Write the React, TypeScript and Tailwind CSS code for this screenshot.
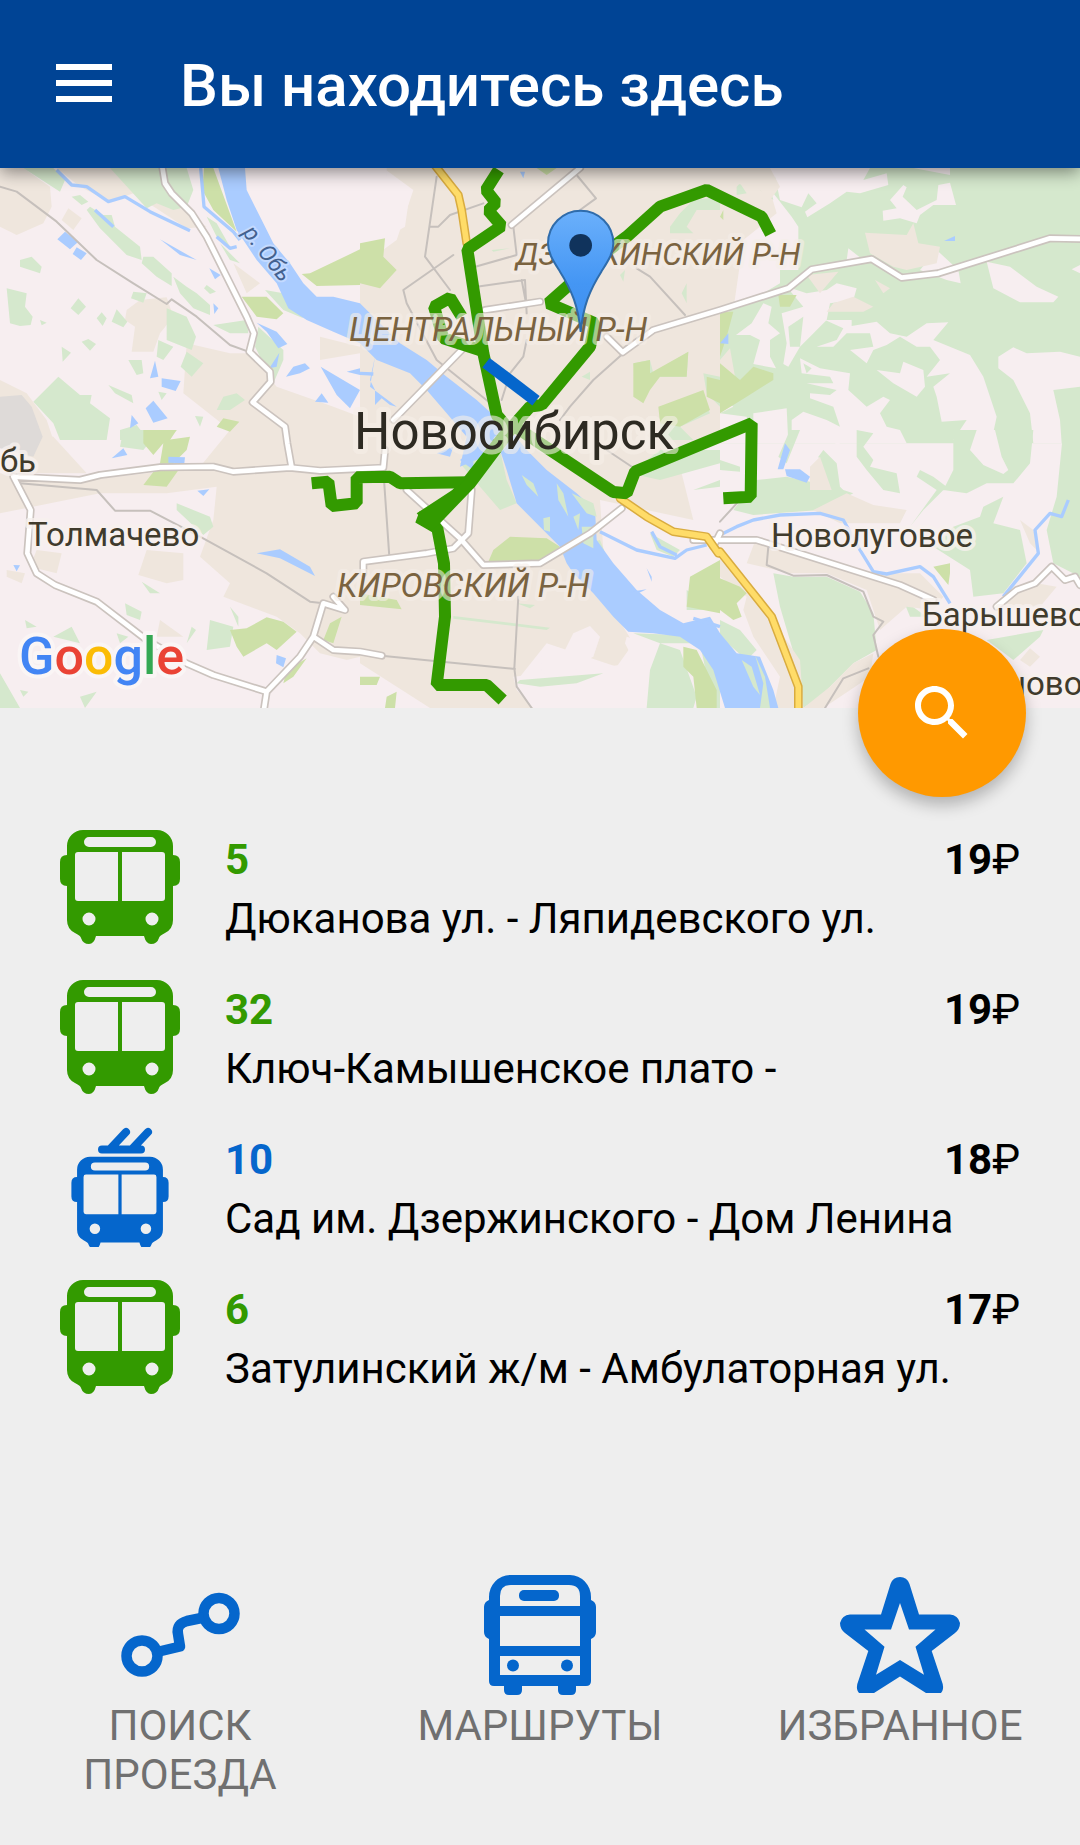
import React from "react";

type Kind = "bus" | "trolley";

const routes: { id: string; kind: Kind; name: string; price: number }[] = [
  { id: "5", kind: "bus", name: "Дюканова ул. - Ляпидевского ул.", price: 19 },
  { id: "32", kind: "bus", name: "Ключ-Камышенское плато -", price: 19 },
  { id: "10", kind: "trolley", name: "Сад им. Дзержинского - Дом Ленина", price: 18 },
  { id: "6", kind: "bus", name: "Затулинский ж/м - Амбулаторная ул.", price: 17 },
];

/* The map is drawn in six tiles, 1080 units wide each. */
const TILE = {
  a: "translate(0 480)",
  b: "translate(1080 480)",
  c: "translate(2160 480)",
  d: "translate(0 1290)",
  e: "translate(1080 1290)",
  f: "translate(2160 1290)",
};

const Land = () => (
  <g>
    <rect y="480" width="3240" height="1660" fill="#f7eef0" />
    <path
      fill="#efe6dd"
      d="M1150 504H2290L2330 640 2230 720 2200 930 2160 1100V1290L2040 1400 2080 1560 1800 1500 1820 1800 1900 1930 1850 2000 1640 1930 1560 2030 1600 2124H1290L1080 1990 960 1960 900 1900 830 1850 670 1790 690 1750 600 1670 640 1560 650 1460 500 1480 300 1480 0 1540V1420L270 1440 600 1400 690 1290 550 1180 560 1030 690 1060 750 1060 830 1160 1000 1220 1080 1250V1060L960 1080 960 1010 1080 1040V800L1190 720 1240 570Z"
    />
    <g fill="#f7eef0">
      <path transform={TILE.b} d="M0 24H80L80 50 150 95 135 200 75 235 0 225Z" />
      <path transform={TILE.e} d="M545 670L610 670 640 610 690 588 720 620 700 680 650 705 640 730 545 728ZM460 740L830 700 870 834H520L470 780ZM800 620L900 650 920 700 830 710 795 640Z" />
      <path transform={TILE.d} d="M830 790L1000 700 1080 680V834H810Z" />
    </g>
    <g fill="#efe6dd">
      <path transform={TILE.a} d="M0 24H70L150 80 155 140 130 190 50 225 0 200ZM205 145L245 175 220 210 185 180ZM170 24H350L430 90 540 145 620 200 560 205 400 100 330 125 240 80ZM380 450L420 420 500 412 520 470 480 520 460 575H395L405 500 375 480ZM0 660L80 700 140 780 160 840H0ZM700 310L780 370 740 400Z" />
      <path transform={TILE.d} d="M440 360L550 370 550 450 500 460 415 435ZM110 360L185 370 170 430 90 410ZM20 420L75 430 65 460 20 440ZM100 0L160 20 260 130 20 130ZM480 570L550 620 470 620Z" />
    </g>
    <path transform={TILE.a} fill="#dedad8" d="M0 710L65 705 95 740 128 830 100 890 0 865Z" />
    <g fill="#d5e8cd">
      <path
        transform={TILE.a}
        d="M70 24H160L195 60 180 95ZM330 24H560L580 90 560 140 520 150 470 130 440 145ZM215 110L240 105 265 125 245 135ZM270 140L310 165 335 165 345 200 420 260 425 300 380 285 300 205 260 150ZM60 300L95 290 125 320 120 340 60 320ZM430 290L460 290 515 340 515 378 470 350 425 310ZM20 385L80 400 75 440 98 470 92 495 60 498 30 490ZM235 415L258 440 235 465 212 445ZM120 480L140 488 125 496ZM305 457L320 475 308 498 290 475ZM350 448L382 485 370 502 335 485ZM520 350L560 380 590 400 630 435 630 465 580 445 540 400ZM500 445L560 470 588 530 575 570 500 540ZM245 545L265 537 288 552 270 572ZM185 560L213 578 188 605ZM400 395L440 400 430 428 393 415ZM475 540L520 560 490 600 470 590ZM560 575L610 610 575 650 542 620ZM385 600L425 600 430 640 410 645ZM620 375L648 395 630 402 612 385ZM640 495L740 480 745 520 690 520ZM775 500L850 570 850 600 820 670 765 560ZM795 390L850 400 890 450 910 475 850 450ZM620 170L650 190 690 260 650 230ZM660 250L720 310 690 300ZM325 675L395 705 400 730 345 700ZM650 750L670 710 710 700 735 720 690 750ZM475 695L500 700 485 720ZM175 650L240 705 275 705 270 730 330 775 320 840H180L160 790 100 725ZM360 810L410 795 445 840H360ZM585 768L610 770 600 800Z"
      />
      <path transform={TILE.b} d="M780 345L795 330 790 365ZM930 200L960 160 1000 120 1080 110V150L1010 150 980 200 1000 220 930 220ZM395 270L450 265 400 275ZM965 400L980 370 980 430ZM665 650L690 635 690 660ZM820 610L870 600 880 640 985 575 980 650 900 650 830 690ZM1030 640L1080 650V740L1040 700ZM900 740L1030 720 1050 760 960 800 1000 840H900Z" />
      <path transform={TILE.d} d="M180 0H310L240 30ZM370 0H480L430 60 360 50ZM530 220L630 260 640 290 610 315 530 240ZM425 455L480 490 450 490ZM375 520L425 545 420 570 380 555ZM75 570L110 590 80 595ZM215 590L240 640 160 620ZM0 730L60 834H0ZM60 780L85 785 70 800ZM240 800L290 785 255 834ZM630 570L700 590 690 650 620 660ZM690 530L715 560 715 590ZM350 610L385 620 360 640ZM575 590L588 600 560 640Z" />
      <path transform={TILE.e} d="M300 100L420 60 440 150 470 220 420 240 360 170ZM470 520L525 525 510 535ZM280 558L570 593 560 600 280 566ZM480 750L730 730 650 760 540 770 470 760ZM870 720L900 640 960 660 1010 800 1000 834H860ZM1020 640L1080 740V834H1060ZM810 130L900 60 1080 60V100L900 150ZM1000 180L1080 150V170ZM980 480L1080 540 980 540ZM680 340L720 330 740 380ZM820 610L960 615 1000 640 900 640ZM870 310L960 360 940 380 890 360Z" />
      <path transform={TILE.c} d="M50 80L60 70 80 100 50 105ZM120 90L150 85 160 120ZM170 24H1080V850H0V760L40 740 0 700 0 540 30 440 130 400 180 370V330H235V200L215 170 160 100Z" />
    </g>
    <g fill="#f7eef0">
      <path
        transform={TILE.c}
        d="M160 24H450L430 60 500 40 505 75 420 100 380 95 330 130 262 172 255 155 290 130 265 100 245 142 180 120ZM535 24H690V45L580 24ZM550 75L560 82 548 110 590 150 650 120 655 75 690 68 708 135 640 135 600 165 590 190 540 175 490 182 488 152 530 145 510 120ZM385 265L430 300 380 300ZM650 270L715 330 722 370 680 360 600 330ZM800 305L870 320 950 380 1015 410 1000 427 900 427 820 385ZM1080 315L1055 328 1080 340ZM200 380L260 400 320 390 350 370 410 385 400 420 330 430 320 480 270 530 240 560 205 620 190 612 200 550 185 460 250 440ZM130 430L155 440 145 490 180 520 150 540 150 590 168 625 100 612 120 540 90 525 48 525 95 490Z"
      />
      <path
        transform={TILE.c}
        d="M315 480H395V498L470 485 510 520 560 530 620 490 685 487 640 540 750 585 790 650 830 770 815 840H700L740 780 665 785 650 710 640 680 690 640 620 650 660 600 630 560 590 560 540 530 500 555 460 570 440 610 390 570 460 560 450 520 380 520 340 560 290 560 350 540 370 505ZM240 595L300 625 390 640 385 690 440 740 490 710 510 720 480 760 500 800 540 810 560 850H215L215 780 250 755 320 780 360 800 340 740 270 715 270 700 330 705 350 690 260 670 340 670 330 650 245 640ZM470 630L540 640 550 605 610 630 615 680 590 710 520 670ZM835 590L880 562 920 580 1020 575 1080 590V680L1000 690 1020 780 1025 850H940L930 760 880 660 835 625ZM100 760L200 745 205 850H100ZM0 760L80 770 90 850H0Z"
      />
    </g>
    <path transform={TILE.c} fill="#efe6dd" d="M435 218L560 225 580 190 595 250 660 260 650 310 560 330 520 320 450 280ZM260 345L355 335 300 400ZM0 24H150L180 80 150 120 110 80 40 70 0 80ZM340 430L400 410 460 440 430 455 320 455ZM465 360L510 385 490 400ZM0 600L30 565 45 650 30 710 0 690Z" />
    <g fill="#d5e8cd">
      <path transform={TILE.c} d="M205 500L250 470 240 560 210 560ZM250 610L275 625 260 640Z" />
      <path
        transform={TILE.f}
        d="M1030 0H1080V440L1000 400 980 300 1010 200ZM700 0H940L930 100 880 160 800 160 740 190 670 180 700 120ZM110 150L200 140 340 170 400 190 300 240 100 255 40 240ZM410 0L460 10 430 50 460 90 450 110 530 130 540 190 490 180 440 120 410 80ZM210 0H240L200 100 175 80ZM310 60L350 100 360 170 380 190 330 170 295 80ZM600 120L640 140 680 170 610 240 570 290 650 180 590 140ZM760 500L750 420 640 350 700 290 780 260 790 230 850 200 820 280 900 300 920 400 850 490ZM160 430L220 440 320 440 420 485 460 550 470 660 400 700 300 800 250 834 230 700 180 530ZM800 630L970 600 960 620 880 690ZM550 510L620 560 570 560ZM0 570L60 600 110 660 80 690 0 620ZM0 90L60 110 60 125 0 120Z"
      />
    </g>
    <g fill="#f7eef0">
      <path transform={TILE.f} d="M770 0L825 0 845 80 865 120 850 132 790 105 750 60ZM400 0L330 0 350 50ZM570 62L600 68 575 76Z" />
    </g>
    <g fill="#efe6dd">
      <path transform={TILE.f} d="M270 110L300 80 335 180 270 180ZM280 240L380 190 460 225 560 240 540 280H360ZM110 320L430 430 600 430 670 500 640 540 560 530 480 600 440 480 320 430 210 430 80 400ZM0 350L60 430 150 560 240 690 250 834H160L180 740 100 620 70 540 80 500 0 440ZM400 700L460 670 450 740 310 834H250L330 770ZM900 270L940 300 960 370 930 340ZM860 500L950 460 1010 470 960 530 850 530ZM930 655L960 680 930 710 900 690Z" />
    </g>
    <g fill="#cde0a8">
      <path transform={TILE.a} d="M612 24H640L710 215 640 150 607 90ZM725 410H800L850 460 830 478 770 470ZM930 340L1080 268V375L950 378 905 342ZM650 800L670 775 718 785 690 815ZM430 840L490 810 530 810 510 840Z" />
      <path transform={TILE.b} d="M0 250L75 235 70 290 110 330 60 385 0 370ZM530 24H590L560 45ZM820 610L870 600 870 640 985 575 980 650 900 650 870 690 850 730 820 710ZM1040 650L1080 660V730L1040 710ZM895 740L1030 690 1050 750 960 800 900 790Z" />
      <path transform={TILE.c} d="M0 455H40L20 530 0 590ZM0 610L60 660 100 620 160 640 160 660 80 710 0 760ZM175 405H230L210 440 180 440ZM0 170L10 150 10 180Z" />
      <path transform={TILE.d} d="M430 0L530 0 500 30 570 20 560 60 520 100 550 100 500 170 430 165 480 100 490 40 460 75 430 40ZM690 600L740 595 800 562 850 575 890 605 830 660 800 640 730 680 710 650ZM990 580L1025 560 1000 640 970 630ZM860 720L920 685 880 740 850 760Z" />
      <path transform={TILE.e} d="M385 395L400 360 450 320 560 325 600 350 560 385 520 400ZM0 490L110 510 125 538 0 525ZM0 740L60 740 50 765 0 765ZM80 800L110 785 105 834H75ZM980 530L990 440 1080 390V550ZM970 650L1010 660 1070 780 1070 834H1010L1000 740 970 710Z" />
      <path transform={TILE.f} d="M0 445L60 470 80 490 50 520 65 560 40 570 0 540ZM640 410L690 400 690 430 685 465ZM0 210L20 190Z" />
    </g>
  </g>
);

const Water = () => (
  <g>
    <g fill="#aaccff">
      <path d="M655 504L680 600 710 690 770 780 830 850 865 925 920 960 1000 995 1080 1030 1130 1080 1230 1120 1280 1170 1340 1240 1400 1310 1380 1400 1500 1350 1520 1410 1550 1510 1620 1580 1680 1640 1700 1690 1720 1720 1780 1780 1840 1850 1885 1895 1960 1900 2040 1910 2100 1950 2140 2010 2175 2124H2335L2320 2070 2280 1970 2210 1960 2160 1900 2130 1850 2050 1870 1980 1830 1910 1770 1840 1690 1790 1620 1785 1530 1730 1480 1640 1410 1580 1350 1540 1300 1430 1200 1340 1130 1280 1080 1200 1030 1110 940 1080 910 1000 890 950 890 910 850 870 790 820 730 790 670 740 570 735 504Z" />
      <path transform={TILE.a} d="M195 215L235 245 210 268 172 238ZM230 262L260 280 243 300 218 282ZM480 238L590 300 540 285ZM628 325L662 345 645 358ZM640 430L655 445 643 462ZM770 488L830 515 862 552 835 565 800 515ZM838 578L830 620 808 625ZM858 650L880 620 915 610 930 625 900 640ZM962 620L1080 690 1050 745 1010 705ZM965 700L985 728 945 725ZM465 602L475 650 450 655ZM485 655L542 663 527 693 485 680ZM460 722L503 775 460 788 437 745ZM395 765L415 790 390 805ZM1040 635L1080 625V645Z" />
      <path transform={TILE.b} d="M480 35H495L490 55ZM45 590L30 680 110 740 90 735 65 715 45 735 45 690 30 660Z" />
      <path transform={TILE.c} d="M0 550L25 520V552ZM672 243L705 228V243Z" />
      <path transform={TILE.d} d="M335 85L370 55 382 75ZM505 80L555 82 553 100 505 98ZM592 182L628 178 610 198ZM770 370L840 358 930 410 945 438 880 405 840 385ZM40 405L60 406 50 424ZM830 675L858 685 850 712 828 700Z" />
      <path transform={TILE.e} d="M860 415L875 440 875 455ZM810 485L860 478 830 492ZM300 90L340 60 340 120ZM230 70L280 50 270 80Z" />
      <path transform={TILE.f} d="M195 40L210 60 190 118H173ZM195 118L240 118 270 140 260 158 200 138Z" />
    </g>
    <g fill="none" stroke="#aaccff" strokeWidth="10" strokeLinejoin="round">
      <path transform={TILE.a} d="M170 30L215 75 260 80 325 125 375 110 450 155 570 212" />
      <path transform={TILE.a} d="M602 24L612 140 700 215 720 240M650 230L690 265 710 260M285 150L340 200" />
      <path transform={TILE.b} d="M0 640L40 642" />
      <path transform={TILE.e} d="M720 305L830 360 945 385 980 360 1040 345M875 305L900 350 950 375M1000 565L1080 590" />
      <path transform={TILE.f} d="M0 315L50 290 100 270 180 255 300 250 370 270 420 360 460 425 500 432 600 410 640 440 690 520M850 500L955 370 945 300 990 250 1025 260 1045 210" />
    </g>
    <g fill="#d5e8cd">
      <path transform={TILE.e} d="M485 135L520 160 535 200 500 165ZM590 160L610 190 625 260 595 210ZM550 265L570 260 570 305 552 300ZM635 190L700 220 710 260 680 250ZM665 290L700 290 700 355 670 340ZM640 260L660 250 655 300Z" />
      <path transform={TILE.f} d="M65 690L95 710 120 795 100 770ZM105 675L135 740 150 834H120L130 760Z" />
    </g>
  </g>
);

const thin = (
  <>
    <path transform={TILE.a} d="M0 80L50 95 170 185 290 300 400 370 500 432 515 418 590 470 690 555 745 575" />
    <path transform={TILE.b} d="M230 50L195 290 270 390M210 200L235 200 270 165 370 130M280 285L130 390 140 430 230 600 410 745M330 325L470 285 460 200M350 380L495 360 500 460M485 360L500 440M500 540L490 590 450 640 425 720M650 45L708 115 660 150M830 325L870 350 975 465M790 580L700 660 630 740 600 780" />
    <path transform={TILE.d} d="M60 160L290 180 345 242 450 242 600 320 800 430 930 515 970 520" />
    <path transform={TILE.e} d="M70 120L88 380M475 500L463 715 470 770 515 834M65 677L465 717M740 60L830 120" />
    <path transform={TILE.f} d="M145 350L140 405 220 437 320 435 430 485 460 560 490 575 460 615 475 680M445 715L370 745 315 834M0 275L55 215" />
  </>
);

const major = (
  <>
    <path transform={TILE.a} d="M485 10L495 70 515 100 575 160 620 230 680 350 740 470 762 520 748 575 810 635 812 665 758 727 855 800 862 850 875 923" />
    <path transform={TILE.d} d="M40 140L240 150 300 135 480 112 640 110 700 125 870 113 960 122 1150 113 1155 60M40 140L92 240 82 370 110 430 165 465 290 515 440 630 560 700 640 735 800 785 900 680 940 620 970 520 1035 540 1000 500M790 850L800 785M940 620L1000 660 1080 665 1145 677" />
    <path transform={TILE.b} d="M455 195L660 24M375 450L540 425M740 530L788 577 880 510 980 480 1080 450 1285 385 1355 328 1535 297 1625 353 1735 340 2070 235 2180 237M305 570L100 780" />
    <path transform={TILE.e} d="M140 180L300 325 370 405 540 400 690 310 785 235M335 180L325 310 280 355 200 370 10 395V430" />
    <path transform={TILE.f} d="M-80 330L110 330 540 465 640 510M830 530L890 480 945 460 995 410 1035 450 1065 440 1080 465M-20 350L0 310" />
  </>
);

const highway = (
  <>
    <path transform={TILE.b} d="M220 10L295 105 305 150 320 250" />
    <path transform={TILE.e} d="M780 205L860 260 940 305 1040 320 1075 370" />
    <path transform={TILE.f} d="M0 365L155 560 235 770V850" />
  </>
);

const Roads = () => (
  <g fill="none" strokeLinejoin="round" strokeLinecap="round">
    <g stroke="#c6c0bc" strokeWidth="6">{thin}</g>
    <g stroke="#cbc3be" strokeWidth="24">{major}</g>
    <g stroke="#ffffff" strokeWidth="14">{major}</g>
    <g stroke="#d9ac40" strokeWidth="26">{highway}</g>
    <g stroke="#ffdc68" strokeWidth="17">{highway}</g>
  </g>
);

const Tracks = () => (
  <g fill="none" stroke="#339a00" strokeWidth="36" strokeLinejoin="bevel">
    <path transform={TILE.b} d="M416 30L378 90 408 128 385 152 425 198 322 268 370 580 410 765 440 800" />
    <path transform={TILE.b} d="M375 575L250 535 222 440 270 413 305 470" />
    <path transform={TILE.b} d="M1232 222L1205 170 1040 90 900 140 800 230 740 275 565 430 705 490 690 560 545 735 510 740 430 830 320 970 220 1080 175 1072 232 1105 252 1210 255 1370 230 1575 380 1575 428 1620" />
    <path transform={TILE.e} d="M330 157L120 160 90 140 -10 142 -10 220 -85 228 -95 155 -145 160" />
    <path transform={TILE.e} stroke="none" fill="#339a00" d="M170 250L300 165 440 10 480 -10 345 170 235 285 215 300Z" />
    <path transform={TILE.e} d="M450 -20L760 186 800 190 825 125 1175 -20 1172 200 1090 205" />
    <path transform={TILE.b} stroke="#0566cc" d="M378 608L528 722" />
  </g>
);

const Labels = () => (
  <g transform="scale(3)" fontFamily="Roboto, sans-serif" strokeLinejoin="round" style={{ paintOrder: "stroke" }}>
    <g fill="#7a6340" stroke="#f5eee8" strokeOpacity="0.6" strokeWidth="8" fontStyle="italic">
      <text x="516" y="265" fontSize="31">ДЗЕРЖИНСКИЙ Р-Н</text>
      <text x="349" y="341" fontSize="33">ЦЕНТРАЛЬНЫЙ Р-Н</text>
      <text x="337" y="597" fontSize="33">КИРОВСКИЙ Р-Н</text>
    </g>
    <g fill="#403b2c" stroke="#f7f1ee" strokeOpacity="0.8" strokeWidth="8" fontSize="33">
      <text x="28" y="546">Толмачево</text>
      <text x="771" y="547">Новолуговое</text>
      <text x="922" y="626">Барышево</text>
      <text x="1007" y="695">ново</text>
      <text x="36" y="472" textAnchor="end">Обь</text>
    </g>
    <text x="354" y="449" fill="#2d2a22" stroke="#f5eee8" strokeOpacity="0.6" strokeWidth="10" fontSize="51">
      Новосибирск
    </text>
    <text
      transform="translate(242 233) rotate(52)"
      fill="#43618f"
      stroke="#c3daff"
      strokeWidth="4"
      fontSize="23"
      fontStyle="italic"
    >
      р. Обь
    </text>
    <text x="19" y="674" fontSize="52" fontWeight="500" stroke="#faf5f5" strokeWidth="8">
      <tspan fill="#4285f4">G</tspan>
      <tspan fill="#ea4335">o</tspan>
      <tspan fill="#fbbc05">o</tspan>
      <tspan fill="#4285f4">g</tspan>
      <tspan fill="#34a853">l</tspan>
      <tspan fill="#ea4335">e</tspan>
    </text>
  </g>
);

const CityMap = () => (
  <svg
    viewBox="0 504 3240 1620"
    preserveAspectRatio="xMidYMid slice"
    className="block h-[540px] w-full"
    role="img"
    aria-label="Карта Новосибирска"
  >
    <defs>
      <linearGradient id="pin" x1="0" y1="0" x2="0" y2="1">
        <stop offset="0" stopColor="#6bb0fb" />
        <stop offset="0.6" stopColor="#4496f4" />
        <stop offset="1" stopColor="#3f8fee" />
      </linearGradient>
    </defs>
    <Land />
    <Water />
    <Roads />
    <Tracks />
    <Labels />
    <g transform={TILE.b}>
      <path
        d="M662 516C655 440 635 390 600 335C580 303 564 280 564 250A98 98 0 0 1 760 250C760 280 744 303 724 335C689 390 669 440 662 516Z"
        fill="url(#pin)"
        stroke="#2f6cab"
        strokeWidth="6"
      />
      <circle cx="662" cy="256" r="34" fill="#10335c" />
    </g>
  </svg>
);

const BusShape = () => (
  <path
    fillRule="evenodd"
    d="M23 3H97A16 16 0 0 1 113 19V28Q120 28 120 35V52Q120 59 113 59V93Q113 102 105 106Q99 109 99 111Q97 117 91 117Q86 117 84 109H36Q34 117 29 117Q23 117 21 111Q21 109 15 106Q7 102 7 93V59Q0 59 0 52V35Q0 28 7 28V19A16 16 0 0 1 23 3ZM29 10A5 5 0 0 0 29 20H91A5 5 0 0 0 91 10ZM18 25Q15 25 15 28V71Q15 74 18 74H58V25ZM62 25V74H102Q105 74 105 71V28Q105 25 102 25ZM29 85.500A6.500 6.500 0 1 0 29 98.500A6.500 6.500 0 1 0 29 85.500ZM92 85.500A6.500 6.500 0 1 0 92 98.500A6.500 6.500 0 1 0 92 85.500Z"
  />
);

const VehicleIcon = ({ kind }: { kind: Kind }) =>
  kind === "bus" ? (
    <svg viewBox="0 0 120 120" className="size-[120px] shrink-0 fill-[#339a00]" aria-hidden="true">
      <BusShape />
    </svg>
  ) : (
    <svg viewBox="0 0 120 120" className="size-[120px] shrink-0 fill-[#0566cc]" aria-hidden="true">
      <g transform="translate(11.400 27.300) scale(0.810)">
        <BusShape />
      </g>
      <path d="M42 22.500H81M51 21L66 5M73 21L88 5" fill="none" stroke="#0566cc" strokeWidth="8" strokeLinecap="round" />
    </svg>
  );

const PathIcon = () => (
  <svg viewBox="0 0 120 120" className="size-[120px] fill-none stroke-[#0566cc]" strokeWidth="10.500" aria-hidden="true">
    <circle cx="22" cy="81" r="15.500" />
    <circle cx="99" cy="38.500" r="15.500" />
    <path d="M37 77L60 71.500 58 59Q56 49 67 46L84 42.500" strokeLinejoin="round" />
  </svg>
);

const CoachIcon = () => (
  <svg viewBox="0 0 120 120" className="size-[120px] fill-[#0566cc]" aria-hidden="true">
    <path
      fillRule="evenodd"
      d="M30 0H90A21 22 0 0 1 111 22V25Q116 27 116 32V57Q116 62 111 64V106Q111 111 106 111H96V115Q96 120 91 120H83Q78 120 78 115V111H42V115Q42 120 37 120H29Q24 120 24 115V111H14Q9 111 9 106V64Q4 62 4 57V32Q4 27 9 25V22A21 22 0 0 1 30 0ZM31 10Q20 10 20 21V31H100V21Q100 10 89 10ZM20 41V71H100V41ZM20 81V100H100V81Z"
    />
    <rect x="39" y="15" width="40" height="11" rx="5" />
    <circle cx="33" cy="90.500" r="6" />
    <circle cx="87" cy="90.500" r="6" />
  </svg>
);

/* Rounded star outline with a sharp star cut out of it; the lower tips end flat. */
const StarIcon = () => (
  <svg viewBox="0 0 120 120" className="size-[120px]" aria-hidden="true">
    <path
      className="fill-[#0566cc]"
      fillRule="evenodd"
      d="M60 2Q67 2 69.500 9L79 39.500H110Q118 40 120 48Q120 54 115 58L91.700 76 102.700 109Q104 115 101 118H86L60 101.500 34 118H19Q16 115 17.300 109L28.300 76 5 58Q0 54 0 48Q2 40 10 39.500H41L50.500 9Q53 2 60 2ZM60 28L51 54.500H24.500L44.500 71.700 36 99.700 60 85 84 99.700 75.500 71.700 95.500 54.500H69Z"
    />
  </svg>
);

const tabs = [
  { label: "ПОИСК ПРОЕЗДА", icon: <PathIcon /> },
  { label: "МАРШРУТЫ", icon: <CoachIcon /> },
  { label: "ИЗБРАННОЕ", icon: <StarIcon /> },
];

export default function App() {
  return (
    <div className="flex min-h-screen flex-col bg-[#eeeeee] font-['Roboto',sans-serif] text-[42px] text-black">
      <header className="relative z-10 flex h-[168px] items-center gap-[60px] bg-[#004495] px-12 shadow-[0_4px_16px_rgba(0,0,0,0.45)]">
        <button type="button" aria-label="Меню" className="size-[72px] cursor-pointer">
          <svg viewBox="0 0 72 72" className="size-[72px] fill-white" aria-hidden="true">
            <path d="M8 16H64V22H8ZM8 32H64V38H8ZM8 48H64V54H8Z" />
          </svg>
        </button>
        <h1 className="pt-1 text-[60px] leading-[72px] font-medium text-white">Вы находитесь здесь</h1>
      </header>

      <section className="relative">
        <CityMap />
        <button
          type="button"
          aria-label="Поиск"
          className="absolute right-[54px] -bottom-[89px] flex size-[168px] cursor-pointer items-center justify-center rounded-full bg-[#ff9900] shadow-[0_8px_16px_rgba(0,0,0,0.25)]"
        >
          <svg viewBox="0 0 24 24" className="size-[72px] fill-white" aria-hidden="true">
            <path d="M15.500 14h-.79l-.28-.27C15.410 12.590 16 11.110 16 9.500 16 5.910 13.090 3 9.500 3S3 5.910 3 9.500 5.910 16 9.500 16c1.610 0 3.090-.59 4.230-1.570l.27.28v.79l5 4.990L20.490 19l-4.990-5zm-6 0C7.010 14 5 11.990 5 9.500S7.010 5 9.500 5 14 7.010 14 9.500 11.990 14 9.500 14z" />
          </svg>
        </button>
      </section>

      <main>
        <ul className="pt-[104px]">
          {routes.map((r) => (
            <li key={r.id}>
              <a href={`#route-${r.id}`} className="flex items-start gap-[45px] px-[60px] py-[15px]">
                <VehicleIcon kind={r.kind} />
                <div className="h-[120px] min-w-0 flex-1 pt-[3px] leading-[59px]">
                  <div className="flex justify-between font-bold">
                    <span className={r.kind === "bus" ? "text-[#339a00]" : "text-[#0566cc]"}>{r.id}</span>
                    <span>
                      {r.price}
                      <span className="font-normal">₽</span>
                    </span>
                  </div>
                  <p className="truncate">{r.name}</p>
                </div>
              </a>
            </li>
          ))}
        </ul>
      </main>

      <nav className="mt-auto grid grid-cols-3 pb-[46px]">
        {tabs.map((t) => (
          <a key={t.label} href="#" className="flex flex-col items-center gap-[6px] px-8 text-center leading-[49px] text-[#707070]">
            {t.icon}
            <span>{t.label}</span>
          </a>
        ))}
      </nav>
    </div>
  );
}
